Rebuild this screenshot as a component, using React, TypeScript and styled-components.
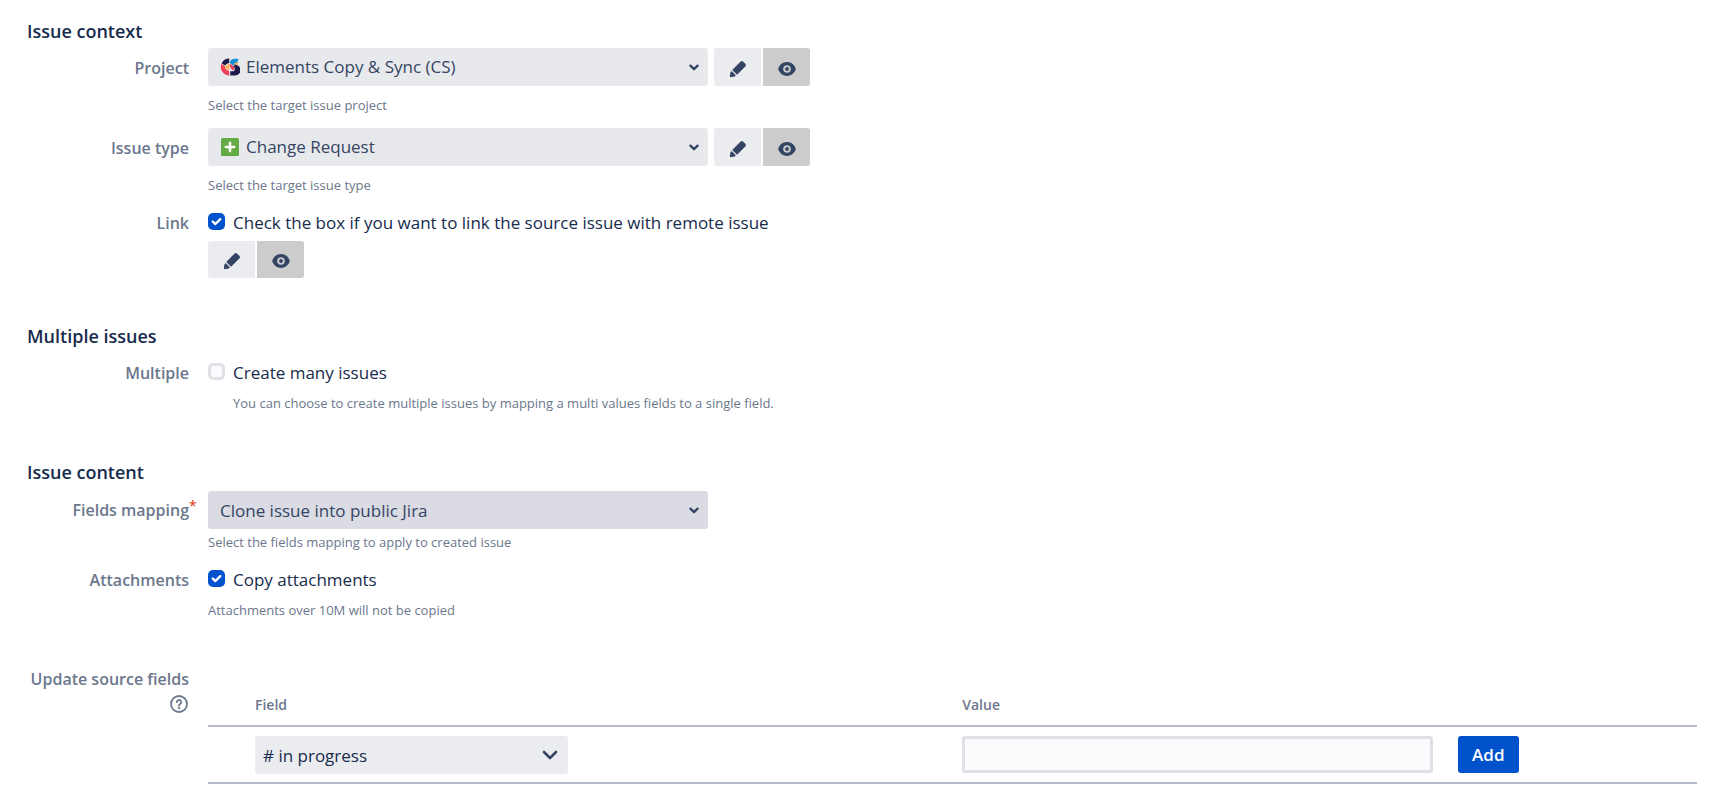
import React from "react";
import styled, { createGlobalStyle } from "styled-components";

const GlobalStyle = createGlobalStyle`
  *, *::before, *::after { box-sizing: border-box; }
  body {
    margin: 0;
    background: #fff;
    color: #172b4d;
    font-family: "Segoe UI", "Open Sans", sans-serif;
    font-size: 17px;
  }
  button, input, select { font: inherit; margin: 0; }
`;

const Form = styled.form`
  display: flex;
  flex-direction: column;
  gap: 46px;
  padding: 19px 26px 0 27px;
`;

const Section = styled.section``;

const Title = styled.h2`
  margin: 0 0 5px;
  font-size: 18px;
  font-weight: 600;
  line-height: 24px;
`;

const Rows = styled.div<{ $offset?: number }>`
  display: flex;
  flex-direction: column;
  gap: 12px;
  padding-top: ${(p) => p.$offset ?? 0}px;
`;

const Row = styled.div`
  display: grid;
  grid-template-columns: 162px minmax(0, 1fr);
  column-gap: 19px;
  align-items: start;
`;

const Label = styled.label<{ $height: number }>`
  position: relative;
  color: #6b778c;
  font-size: 16px;
  font-weight: 600;
  line-height: ${(p) => p.$height}px;
  text-align: right;
  white-space: nowrap;
`;

const Required = styled.span`
  position: absolute;
  left: 100%;
  top: -4px;
  color: #de350b;
  font-size: 14px;
  font-weight: 400;
`;

const Help = styled.p<{ $top: number; $indent?: boolean }>`
  margin: ${(p) => p.$top}px 0 0;
  padding-left: ${(p) => (p.$indent ? 25 : 0)}px;
  color: #6b778c;
  font-size: 13px;
  line-height: 22px;
`;

const Controls = styled.div`
  display: flex;
  gap: 6px;
`;

const SelectBox = styled.div<{ $width: number }>`
  position: relative;
  flex: 0 1 ${(p) => p.$width}px;
  max-width: ${(p) => p.$width}px;
  height: 38px;
`;

const Select = styled.select<{ $bg: string; $color: string; $icon?: boolean; $inset?: number }>`
  appearance: none;
  display: block;
  width: 100%;
  height: 38px;
  padding: ${(p) => (p.$icon ? "0 36px 2px 38px" : `0 36px 0 ${p.$inset ?? 12}px`)};
  border: 0;
  border-radius: 3px;
  background: ${(p) => p.$bg};
  color: ${(p) => p.$color};
`;

const LeadIcon = styled.span`
  position: absolute;
  left: 12px;
  top: 0;
  display: flex;
  align-items: center;
  justify-content: center;
  width: 20px;
  height: 38px;
  pointer-events: none;
`;

const Caret = styled.span<{ $right: number }>`
  position: absolute;
  right: ${(p) => p.$right}px;
  top: 0;
  display: flex;
  align-items: center;
  height: 38px;
  pointer-events: none;
`;

const Toggle = styled.div<{ $stacked?: boolean }>`
  display: flex;
  gap: 2px;
  height: ${(p) => (p.$stacked ? 37 : 38)}px;
  margin-top: ${(p) => (p.$stacked ? 3 : 0)}px;
`;

const ToggleButton = styled.button<{ $active?: boolean }>`
  display: flex;
  align-items: center;
  justify-content: center;
  width: 47px;
  height: 100%;
  padding: 3px 0 0;
  border: 0;
  border-radius: ${(p) => (p.$active ? "0 3px 3px 0" : "3px 0 0 3px")};
  background: ${(p) => (p.$active ? "#ccc" : "#ebecf0")};
  color: #344563;
`;

const Option = styled.div`
  display: flex;
  align-items: center;
  gap: 8px;
  line-height: 30px;
`;

const Checkbox = styled.input`
  appearance: none;
  width: 17px;
  height: 17px;
  border: 3px solid #dfe1e6;
  border-radius: 5px;
  background: #fafbfc;

  &:checked {
    border: 0;
    background: #0052cc;
  }
`;

const CheckHolder = styled.span`
  position: relative;
  display: flex;
  padding-bottom: 3px;

  svg {
    position: absolute;
    left: 0;
    top: 0;
    pointer-events: none;
  }
`;

const HelpButton = styled.button`
  display: block;
  margin: 4px 1px 0 auto;
  padding: 0;
  border: 0;
  background: none;
  color: #6b778c;
  line-height: 0;
`;

const Table = styled.table`
  width: 100%;
  margin-top: 16px;
  border-collapse: collapse;
  table-layout: fixed;
`;

const Col = styled.col<{ $width?: string }>`
  width: ${(p) => p.$width ?? "auto"};
`;

const HeadCell = styled.th`
  height: 43px;
  padding: 0;
  border-bottom: 2px solid #b3b9c6;
  color: #6b778c;
  font-size: 14px;
  font-weight: 600;
  text-align: left;
`;

const Cell = styled.td`
  padding: 9px 25px 8px 0;
  border-bottom: 2px solid #b3b9c6;
  vertical-align: top;
`;

const TextInput = styled.input`
  display: block;
  width: 100%;
  height: 37px;
  padding: 0 8px;
  border: 3px solid #dfe1e6;
  border-radius: 3px;
  background: #fafbfc;
`;

const AddButton = styled.button`
  display: block;
  height: 37px;
  padding: 0 14px;
  border: 0;
  border-radius: 3px;
  background: #0052cc;
  color: #fff;
  font-weight: 600;
`;

const SmallChevron = () => (
  <svg width="10" height="7" viewBox="0 0 10 7" fill="none" stroke="#344563" strokeWidth="2.3" strokeLinecap="round" strokeLinejoin="round">
    <path d="M1.4 1.6 5 5.1 8.600 1.600" />
  </svg>
);

const LargeChevron = () => (
  <svg width="16" height="10" viewBox="0 0 16 10" fill="none" stroke="#344563" strokeWidth="2.600" strokeLinecap="round" strokeLinejoin="round">
    <path d="M2 2 8 8 14 2" />
  </svg>
);

const Pencil = () => (
  <svg width="18" height="18" viewBox="0 0 18 18" fill="currentColor">
    <path d="M11.4 1.7a2 2 0 0 1 2.800 0l2.100 2.100a2 2 0 0 1 0 2.800l-8.200 8.200-4.900-4.900z" />
    <path d="M2.500 10.900 6.900 15.300 5.200 16.700 1.600 17.100a.6.6 0 0 1-.7-.7l.4-3.600z" />
  </svg>
);

const Eye = () => (
  <svg width="18" height="14" viewBox="0 0 18 14" fill="currentColor" fillRule="evenodd">
    <path d="M9 0C4.200 0 1.300 3.600.4 6.200a2.300 2.300 0 0 0 0 1.600C1.300 10.400 4.200 14 9 14s7.700-3.600 8.600-6.200a2.300 2.300 0 0 0 0-1.600C16.700 3.600 13.800 0 9 0Zm0 3.200a3.800 3.800 0 1 1 0 7.600 3.800 3.800 0 0 1 0-7.600Z" />
    <circle cx="9" cy="7" r="1.900" />
  </svg>
);

const Tick = () => (
  <svg width="17" height="17" viewBox="0 0 17 17" fill="none" stroke="#fff" strokeWidth="2.400" strokeLinecap="round" strokeLinejoin="round">
    <path d="M4.800 8.600 7.400 11 12.300 6.200" />
  </svg>
);

const ProjectLogo = () => (
  <svg width="20" height="18" viewBox="0 0 20 18">
    <path d="M9.200 0.500A8.600 8.600 0 0 0 1.600 5.500L5.200 7.600A4.500 4.500 0 0 1 9.200 5Z" fill="#1d1a4b" />
    <path d="M1.300 6A8.600 8.600 0 0 0 9.200 17.500V12.800A4.200 4.200 0 0 1 5 8.200Z" fill="#f0415a" />
    <path d="M5.200 8 9.200 5.400V12.400A4.200 4.200 0 0 1 5.200 8Z" fill="#fbb45c" />
    <path d="M18.500 0.800H13.800A4.800 4.800 0 0 0 9.800 4.800L13 7.600A8.400 8.400 0 0 0 18.500 0.800Z" fill="#1492d8" />
    <path d="M14.800 4.800H18.200V6.800H14Z" fill="#fbb45c" />
    <path d="M9.800 5.400A6 6 0 0 0 14.500 12.800L13.800 8.200Z" fill="#f0415a" />
    <path d="M14.200 6.800A5.400 5.400 0 1 1 14.600 17.500H10.300V13.200H13.800A2 2 0 0 0 14.200 9.800Z" fill="#1d1a4b" />
  </svg>
);

const PlusBadge = () => (
  <svg width="18" height="18" viewBox="0 0 18 18">
    <rect width="18" height="18" rx="1.500" fill="#63ac45" />
    <path d="M9 4.900v8.200M4.900 9h8.200" stroke="#fff" strokeWidth="2.600" strokeLinecap="round" />
  </svg>
);

const Question = () => (
  <svg width="18" height="18" viewBox="0 0 18 18" fill="none" stroke="currentColor" strokeWidth="1.800" strokeLinecap="round">
    <circle cx="9" cy="9" r="8" />
    <path d="M6.800 7.200a2.200 2.200 0 1 1 3.300 1.900c-.7.400-1.100.8-1.100 1.500" />
    <circle cx="9" cy="13" r=".4" />
  </svg>
);

type DropdownProps = {
  id: string;
  value: string;
  icon?: React.ReactNode;
  tone?: "light" | "dark";
};

function Dropdown({ id, value, icon, tone = "light" }: DropdownProps) {
  return (
    <SelectBox $width={500}>
      <Select id={id} $bg={tone === "dark" ? "#dadbe3" : "#e8e9ec"} $color="#344563" $icon={Boolean(icon)}>
        <option>{value}</option>
      </Select>
      {icon && <LeadIcon>{icon}</LeadIcon>}
      <Caret $right={9}><SmallChevron /></Caret>
    </SelectBox>
  );
}

function ModeToggle({ stacked }: { stacked?: boolean }) {
  return (
    <Toggle $stacked={stacked}>
      <ToggleButton type="button" aria-label="Edit"><Pencil /></ToggleButton>
      <ToggleButton type="button" aria-label="View" $active><Eye /></ToggleButton>
    </Toggle>
  );
}

function CheckOption({ id, text, checked = false }: { id: string; text: string; checked?: boolean }) {
  return (
    <Option>
      <CheckHolder>
        <Checkbox type="checkbox" id={id} defaultChecked={checked} />
        {checked && <Tick />}
      </CheckHolder>
      <label htmlFor={id}>{text}</label>
    </Option>
  );
}

export default function App() {
  return (
    <>
      <GlobalStyle />
      <Form>
        <Section>
          <Title>Issue context</Title>
          <Rows>
            <Row>
              <Label htmlFor="project" $height={40}>Project</Label>
              <div>
                <Controls>
                  <Dropdown id="project" value="Elements Copy & Sync (CS)" icon={<ProjectLogo />} />
                  <ModeToggle />
                </Controls>
                <Help $top={8}>Select the target issue project</Help>
              </div>
            </Row>
            <Row>
              <Label htmlFor="type" $height={40}>Issue type</Label>
              <div>
                <Controls>
                  <Dropdown id="type" value="Change Request" icon={<PlusBadge />} />
                  <ModeToggle />
                </Controls>
                <Help $top={8}>Select the target issue type</Help>
              </div>
            </Row>
            <Row>
              <Label htmlFor="link" $height={30}>Link</Label>
              <div>
                <CheckOption id="link" text="Check the box if you want to link the source issue with remote issue" checked />
                <ModeToggle stacked />
              </div>
            </Row>
          </Rows>
        </Section>

        <Section>
          <Title>Multiple issues</Title>
          <Rows $offset={5}>
            <Row>
              <Label htmlFor="multiple" $height={30}>Multiple</Label>
              <div>
                <CheckOption id="multiple" text="Create many issues" />
                <Help $top={4} $indent>
                  You can choose to create multiple issues by mapping a multi values fields to a single field.
                </Help>
              </div>
            </Row>
          </Rows>
        </Section>

        <Section>
          <Title>Issue content</Title>
          <Rows $offset={2}>
            <Row>
              <Label htmlFor="mapping" $height={38}>
                Fields mapping<Required>*</Required>
              </Label>
              <div>
                <Dropdown id="mapping" value="Clone issue into public Jira" tone="dark" />
                <Help $top={2}>Select the fields mapping to apply to created issue</Help>
              </div>
            </Row>
            <Row>
              <Label htmlFor="attachments" $height={30}>Attachments</Label>
              <div>
                <CheckOption id="attachments" text="Copy attachments" checked />
                <Help $top={4}>Attachments over 10M will not be copied</Help>
              </div>
            </Row>
          </Rows>
        </Section>

        <Row>
          <div>
            <Label as="div" $height={24}>Update source fields</Label>
            <HelpButton type="button" aria-label="Help"><Question /></HelpButton>
          </div>
          <Table>
            <colgroup>
              <Col $width="47px" />
              <Col $width="47.5%" />
              <Col $width="33.3%" />
              <Col />
            </colgroup>
            <thead>
              <tr>
                <HeadCell />
                <HeadCell scope="col">Field</HeadCell>
                <HeadCell scope="col">Value</HeadCell>
                <HeadCell />
              </tr>
            </thead>
            <tbody>
              <tr>
                <Cell />
                <Cell>
                  <SelectBox $width={313}>
                    <Select aria-label="Field" $bg="#ebecf0" $color="#172b4d" $inset={8}>
                      <option># in progress</option>
                    </Select>
                    <Caret $right={10}><LargeChevron /></Caret>
                  </SelectBox>
                </Cell>
                <Cell><TextInput type="text" aria-label="Value" /></Cell>
                <Cell><AddButton type="button">Add</AddButton></Cell>
              </tr>
            </tbody>
          </Table>
        </Row>
      </Form>
    </>
  );
}
